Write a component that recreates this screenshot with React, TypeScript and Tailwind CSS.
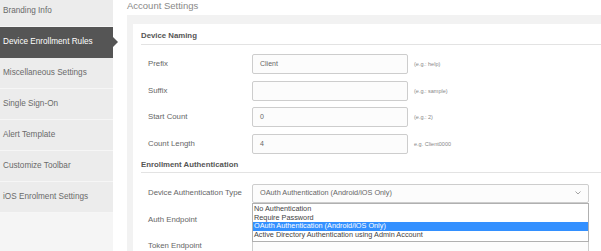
import React from "react";

const menu = [
  "Branding Info",
  "Device Enrollment Rules",
  "Miscellaneous Settings",
  "Single Sign-On",
  "Alert Template",
  "Customize Toolbar",
  "iOS Enrolment Settings",
];

const naming = [
  { label: "Prefix", value: "Client", hint: "(e.g.: help)" },
  { label: "Suffix", value: "", hint: "(e.g.: sample)" },
  { label: "Start Count", value: "0", hint: "(e.g.: 2)" },
  { label: "Count Length", value: "4", hint: "e.g. Client0000" },
];

const options = [
  "No Authentication",
  "Require Password",
  "OAuth Authentication (Android/iOS Only)",
  "Active Directory Authentication using Admin Account",
];

function Row({ label, children }: { label: string; children: React.ReactNode }) {
  return (
    <div className="flex items-center h-[26.5px] shrink-0">
      <div className="w-[111px] shrink-0 pl-[7px] text-[7.8px] text-[#666]">{label}</div>
      {children}
    </div>
  );
}

export default function App() {
  return (
    <div className="flex w-[601px] h-[251px] overflow-hidden bg-white font-['Liberation_Sans',Arial,sans-serif]">
      {/* sidebar */}
      <aside className="w-[113px] shrink-0 flex flex-col bg-[#f5f5f5]">
        <div className="mt-[-4px]">
          {menu.map((m, i) =>
            i === 1 ? (
              <div
                key={m}
                className="relative h-[31px] flex items-center pl-[3px] bg-[#555555] text-white text-[8.2px]"
              >
                {m}
                <span className="absolute right-[-5px] top-[10px] w-0 h-0 border-y-[5px] border-y-transparent border-l-[5px] border-l-[#555555]" />
              </div>
            ) : (
              <div
                key={m}
                className="h-[31px] flex items-center pl-[3px] bg-[#ececec] text-[#6a6a6a] text-[8.2px] border-b border-[#f6f6f6]"
              >
                {m}
              </div>
            )
          )}
        </div>
      </aside>

      {/* content */}
      <main className="flex-1 min-w-0 pl-[14px] flex flex-col">
        <div className="h-[15px] shrink-0 flex items-start pt-[1px] text-[9.5px] leading-[10px] text-[#888]">
          Account Settings
        </div>
        <div className="flex-1 min-h-0 overflow-hidden bg-[#f2f2f2] pt-[9px] pl-[6px]">
          <div className="h-full bg-white pl-[8px]">
            <div className="h-[21px] flex items-center pt-[3px] text-[7.8px] font-bold text-[#555] border-b border-[#e3e3e3]">
              Device Naming
            </div>
            <div className="pt-[6px]">
              {naming.map((n) => (
                <Row key={n.label} label={n.label}>
                  <div className="w-[156px] h-[20px] shrink-0 flex items-center pl-[7px] border border-[#cdcdcd] rounded-[2px] bg-[#fcfcfc] text-[7px] text-[#666]">
                    {n.value}
                  </div>
                  <span className="ml-[6px] text-[5.5px] text-[#888]">{n.hint}</span>
                </Row>
              ))}
            </div>
            <div className="h-[16px] flex items-center pt-[1px] text-[7.8px] font-bold text-[#555] border-b border-[#e3e3e3]">
              Enrollment Authentication
            </div>
            <div className="pt-[7px]">
              <Row label="Device Authentication Type">
                <div className="relative w-[337px] shrink-0">
                  <div className="h-[19px] flex items-center pl-[7px] border border-[#cdcdcd] rounded-[2px] bg-[#fcfcfc] text-[7.3px] text-[#666]">
                    OAuth Authentication (Android/iOS Only)
                    <svg
                      className="absolute right-[8px] top-[7px]"
                      width="6"
                      height="4"
                      viewBox="0 0 6 4"
                    >
                      <path d="M0.5 0.5 L3 3 L5.5 0.5" fill="none" stroke="#999" strokeWidth="0.9" />
                    </svg>
                  </div>
                  <div className="absolute left-0 top-full z-10 w-full bg-white border border-[#b0b0b0] pt-[1px] pb-[1px]">
                    {options.map((o, i) => (
                      <div
                        key={o}
                        className={`h-[8.75px] leading-[8.75px] pl-[1px] text-[7.3px] ${
                          i === 2 ? "bg-[#3390ff] text-white" : "text-[#444]"
                        }`}
                      >
                        {o}
                      </div>
                    ))}
                  </div>
                </div>
              </Row>
              <Row label="Auth Endpoint">
                <div className="w-[337px] h-[20px] shrink-0 border border-[#cdcdcd] rounded-[2px] bg-[#fcfcfc]" />
              </Row>
              <Row label="Token Endpoint">
                <div className="w-[337px] h-[20px] shrink-0 border border-[#cdcdcd] rounded-[2px] bg-[#fcfcfc]" />
              </Row>
            </div>
          </div>
        </div>
      </main>
    </div>
  );
}
